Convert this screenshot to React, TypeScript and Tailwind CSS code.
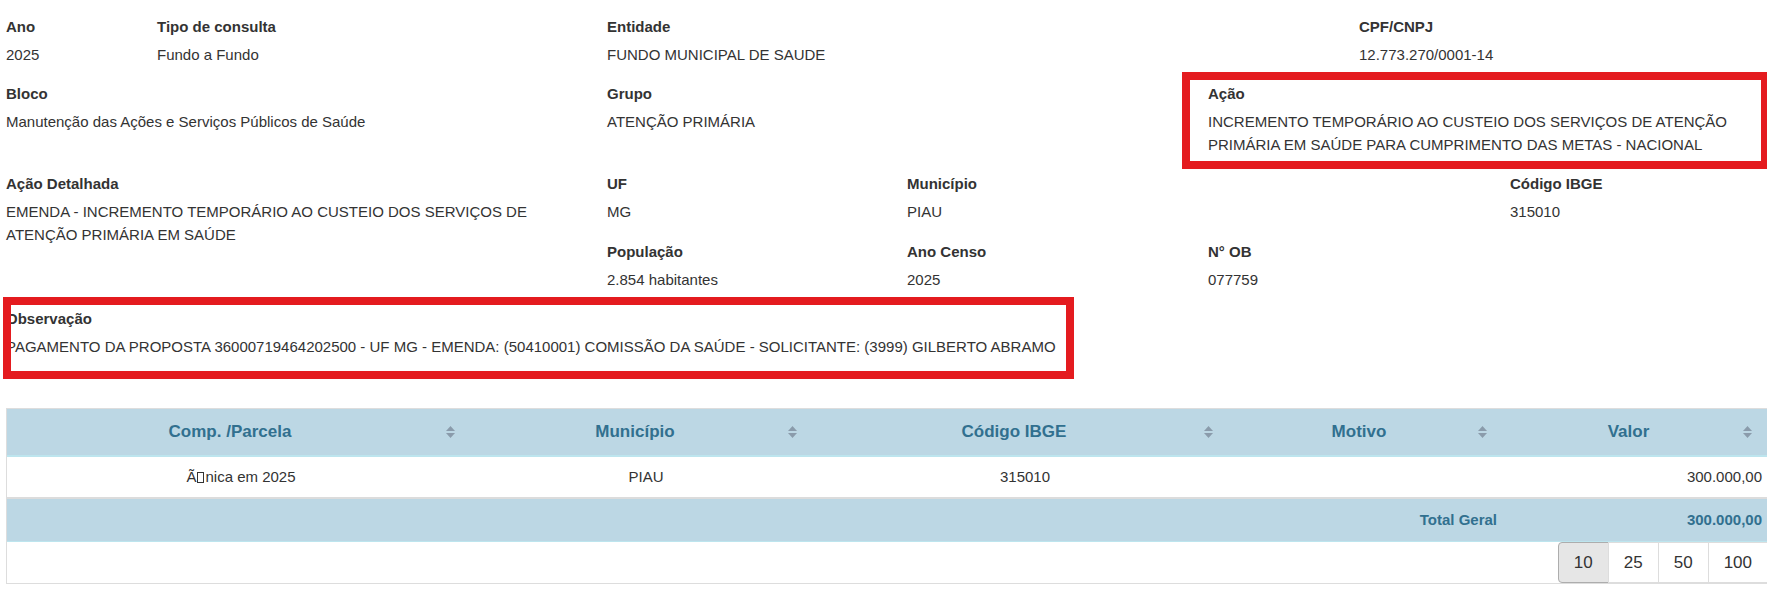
import type { ReactNode } from 'react';

interface FieldProps {
  label: string;
  children: ReactNode;
  className?: string;
  highlight?: ReactNode;
}

function Field({ label, children, className = '', highlight }: FieldProps) {
  return (
    <div className={`relative pr-[30px] mb-[17px] ${className}`}>
      <div className="font-bold leading-[22.5px]">{label}</div>
      <div className="mt-[5.5px] leading-[22.5px]">{children}</div>
      {highlight}
    </div>
  );
}

function SortIcon() {
  return (
    <svg
      className="absolute right-[20px] top-1/2 -translate-y-1/2"
      width="9"
      height="12"
      viewBox="0 0 9 12"
    >
      <polygon points="4.5,0 9,5 0,5" fill="#8a9bab" />
      <polygon points="0,7 9,7 4.5,12" fill="#8a9bab" />
    </svg>
  );
}

const columns = ['Comp. /Parcela', 'Município', 'Código IBGE', 'Motivo', 'Valor'];

export default function App() {
  return (
    <div className="w-full overflow-hidden bg-white text-[15px] text-[#333] font-['Liberation_Sans',Arial,sans-serif] pt-[15.5px] pl-[6px] pb-[15px]">
      {/* linha 1 */}
      <div className="flex">
        <Field label="Ano" className="w-[151px] shrink-0">2025</Field>
        <Field label="Tipo de consulta" className="w-[450px] shrink-0">Fundo a Fundo</Field>
        <Field label="Entidade" className="w-[752px] shrink-0">FUNDO MUNICIPAL DE SAUDE</Field>
        <Field label="CPF/CNPJ" className="flex-1 min-w-0">12.773.270/0001-14</Field>
      </div>

      {/* linha 2 */}
      <div className="flex">
        <Field label="Bloco" className="w-[601px] shrink-0">
          Manutenção das Ações e Serviços Públicos de Saúde
        </Field>
        <Field label="Grupo" className="w-[601px] shrink-0">ATENÇÃO PRIMÁRIA</Field>
        <Field
          label="Ação"
          className="flex-1 min-w-0"
          highlight={
            <div className="absolute top-[-11.5px] bottom-[-13px] left-[-26px] right-[-2px] border-[8px] border-[#e41b1f]" />
          }
        >
          INCREMENTO TEMPORÁRIO AO CUSTEIO DOS SERVIÇOS DE ATENÇÃO PRIMÁRIA EM SAÚDE PARA
          CUMPRIMENTO DAS METAS - NACIONAL
        </Field>
      </div>

      {/* linha 3 */}
      <div className="flex">
        <Field label="Ação Detalhada" className="w-[601px] shrink-0">
          EMENDA - INCREMENTO TEMPORÁRIO AO CUSTEIO DOS SERVIÇOS DE ATENÇÃO PRIMÁRIA EM SAÚDE
        </Field>
        <div className="flex-1 min-w-0">
          <div className="flex">
            <Field label="UF" className="w-[300px] shrink-0">MG</Field>
            <Field label="Município" className="w-[603px] shrink-0">PIAU</Field>
            <Field label="Código IBGE" className="flex-1 min-w-0">315010</Field>
          </div>
          <div className="flex">
            <Field label="População" className="w-[300px] shrink-0">2.854 habitantes</Field>
            <Field label="Ano Censo" className="w-[301px] shrink-0">2025</Field>
            <Field label="N° OB" className="flex-1 min-w-0">077759</Field>
          </div>
        </div>
      </div>

      {/* observação */}
      <Field
        label="Observação"
        highlight={
          <div className="absolute top-[-11px] bottom-[-20.5px] left-[-3px] w-[1071px] border-[8px] border-[#e41b1f]" />
        }
      >
        PAGAMENTO DA PROPOSTA 36000719464202500 - UF MG - EMENDA: (50410001) COMISSÃO DA SAÚDE -
        SOLICITANTE: (3999) GILBERTO ABRAMO
      </Field>

      {/* tabela */}
      <div className="mt-[49.5px] w-[1767px] border-l border-r border-t border-[#ddd]">
        <div className="grid grid-cols-[468px_342px_416px_274px_265px] h-[48px] bg-[#bcd7e4] border-b-2 border-[#bde5ee]">
          {columns.map((col) => (
            <div
              key={col}
              className="relative flex items-center justify-center pl-[8px] pr-[30px] text-[17px] font-bold text-[#31708f]"
            >
              {col}
              <SortIcon />
            </div>
          ))}
        </div>

        <div className="grid grid-cols-[468px_342px_416px_274px_265px] h-[42px] border-b-2 border-[#dcdcdc] items-center">
          <div className="text-center">
            Ã
            <span className="inline-block w-[7px] h-[11px] border border-[#333] mx-[1px] align-[-1px]" />
            nica em 2025
          </div>
          <div className="text-center">PIAU</div>
          <div className="text-center">315010</div>
          <div />
          <div className="text-right pr-[10px]">300.000,00</div>
        </div>

        <div className="grid grid-cols-[468px_342px_416px_274px_265px] h-[43px] bg-[#bcd7e4] border-b border-[#bde5ee] items-center font-bold text-[#31708f]">
          <div />
          <div />
          <div />
          <div className="text-right pr-[10px]">Total Geral</div>
          <div className="text-right pr-[10px]">300.000,00</div>
        </div>

        <div className="flex justify-end h-[42px] border-b border-[#ddd] pr-[4px]">
          <button className="h-[41px] px-[15px] text-[17px] text-[#333] bg-[#e6e6e6] border border-[#adadad] rounded-l-[4px]">
            10
          </button>
          {['25', '50', '100'].map((n) => (
            <button
              key={n}
              className="h-[41px] -ml-px px-[15px] text-[17px] text-[#333] bg-white border border-[#ddd]"
            >
              {n}
            </button>
          ))}
        </div>
      </div>
    </div>
  );
}
